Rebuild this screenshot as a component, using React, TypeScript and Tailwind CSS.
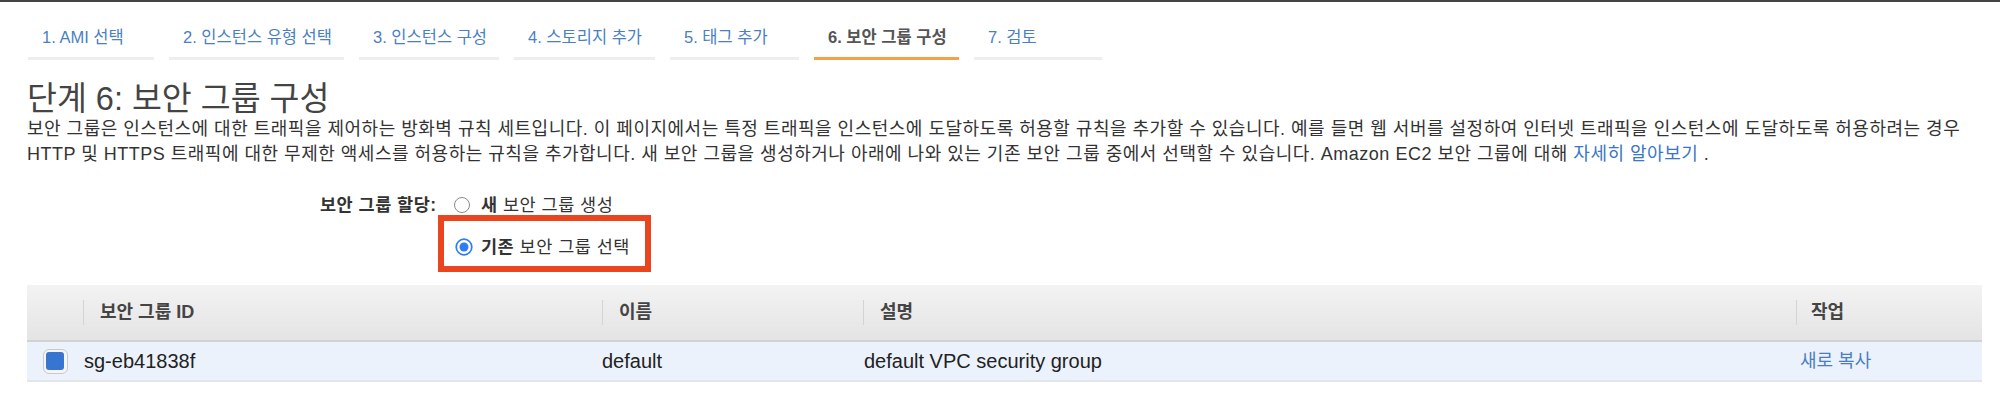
import React from 'react';

const tabs = [
    { label: '1. AMI 선택', width: 'w-[126px]' },
    { label: '2. 인스턴스 유형 선택', width: 'w-[175px]' },
    { label: '3. 인스턴스 구성', width: 'w-[140px]' },
    { label: '4. 스토리지 추가', width: 'w-[141px]' },
    { label: '5. 태그 추가', width: 'w-[129px]' },
    { label: '6. 보안 그룹 구성', width: 'w-[145px]', active: true },
    { label: '7. 검토', width: 'w-[128px]' },
];

function Radio({ checked }: { checked?: boolean }) {
    return (
        <svg width="18" height="18" viewBox="0 0 18 18" className="shrink-0">
            {checked ? (
                <>
                    <circle cx="9" cy="9" r="7.8" fill="#fff" stroke="#2f7cf6" strokeWidth="1.7" />
                    <circle cx="9" cy="9" r="4.5" fill="#2f7cf6" />
                </>
            ) : (
                <circle cx="9" cy="9" r="7.5" fill="#fff" stroke="#8a8a8a" strokeWidth="1" />
            )}
        </svg>
    );
}

export default function App() {
    return (
        <div className="w-[2000px] h-[400px] bg-white border-t-2 border-[#444] text-[#333] font-['Liberation_Sans','Noto_Sans_CJK_KR',sans-serif] overflow-hidden">
            {/* wizard tabs */}
            <div className="flex gap-[15px] pl-[28px]">
                {tabs.map((t) => (
                    <div key={t.label} className={`${t.width} pt-[24px] pb-[9px] pl-[14px] border-b-[3px] ${t.active ? 'border-[#f5a14a]' : 'border-[#eeeeee]'}`}>
                        <span className={`block text-[16.5px] leading-[22px] whitespace-nowrap ${t.active ? 'font-bold text-[#555]' : 'text-[#4a7fc2]'}`}>{t.label}</span>
                    </div>
                ))}
            </div>

            <div className="px-[27px]">
                <h1 className="mt-[21px] text-[32.5px] leading-[36px] font-normal text-[#444]">단계 6: 보안 그룹 구성</h1>
                <p className="text-[18px] leading-[25px] tracking-[0.5px] text-[#333] whitespace-nowrap">
                    보안 그룹은 인스턴스에 대한 트래픽을 제어하는 방화벽 규칙 세트입니다. 이 페이지에서는 특정 트래픽을 인스턴스에 도달하도록 허용할 규칙을 추가할 수 있습니다. 예를 들면 웹 서버를 설정하여 인터넷 트래픽을 인스턴스에 도달하도록 허용하려는 경우
                    <br />
                    HTTP 및 HTTPS 트래픽에 대한 무제한 액세스를 허용하는 규칙을 추가합니다. 새 보안 그룹을 생성하거나 아래에 나와 있는 기존 보안 그룹 중에서 선택할 수 있습니다. Amazon EC2 보안 그룹에 대해{' '}
                    <a className="text-[#3a76c4]">자세히 알아보기</a> .
                </p>

                {/* security group assignment */}
                <div className="flex mt-[25px] pl-[293px] text-[17.5px] leading-[26px] tracking-[0.5px]">
                    <span className="w-[133px] shrink-0 font-bold text-[#333] whitespace-nowrap">보안 그룹 할당:</span>
                    <div className="flex flex-col">
                        <label className="flex items-center gap-[10px]">
                            <Radio />
                            <span><b>새</b> 보안 그룹 생성</span>
                        </label>
                        <div className="relative mt-[16px] ml-[2px] self-start">
                            <label className="flex items-center gap-[8px]">
                                <Radio checked />
                                <span><b>기존</b> 보안 그룹 선택</span>
                            </label>
                            <div className="absolute -left-[17px] -top-[19px] -right-[21px] -bottom-[12px] border-[6px] border-[#e9461f]" />
                        </div>
                    </div>
                </div>

                {/* table */}
                <div className="mt-[25px] w-[1955px]">
                    <div className="grid grid-cols-[56px_519px_261px_933px_1fr] h-[57px] items-center bg-gradient-to-b from-[#f3f3f3] to-[#e4e4e4] border-b-2 border-[#d2d2d2] text-[18px] font-bold text-[#444]">
                        <div />
                        <div className="border-l border-[#d4d4d4] h-[25px] flex items-center pl-[16px]">보안 그룹 ID</div>
                        <div className="border-l border-[#d4d4d4] h-[25px] flex items-center pl-[16px]">이름</div>
                        <div className="border-l border-[#d4d4d4] h-[25px] flex items-center pl-[16px]">설명</div>
                        <div className="border-l border-[#d4d4d4] h-[25px] flex items-center pl-[14px]">작업</div>
                    </div>
                    <div className="grid grid-cols-[56px_519px_261px_933px_1fr] h-[40px] items-center bg-[#ebf2fc] border-b-2 border-[#e2e5ea] text-[20px] text-[#222]">
                        <div className="flex justify-center">
                            <div className="w-[25px] h-[25px] rounded-[6px] border border-[#c9c9c9] bg-[#f5f5f5] flex items-center justify-center">
                                <div className="w-[18px] h-[18px] rounded-[3px] bg-[#3775d0]" />
                            </div>
                        </div>
                        <div className="pl-[1px]">sg-eb41838f</div>
                        <div>default</div>
                        <div className="pl-[1px]">default VPC security group</div>
                        <div className="pl-[4px] text-[18px] text-[#4a7ec0]">새로 복사</div>
                    </div>
                </div>
            </div>
        </div>
    );
}
